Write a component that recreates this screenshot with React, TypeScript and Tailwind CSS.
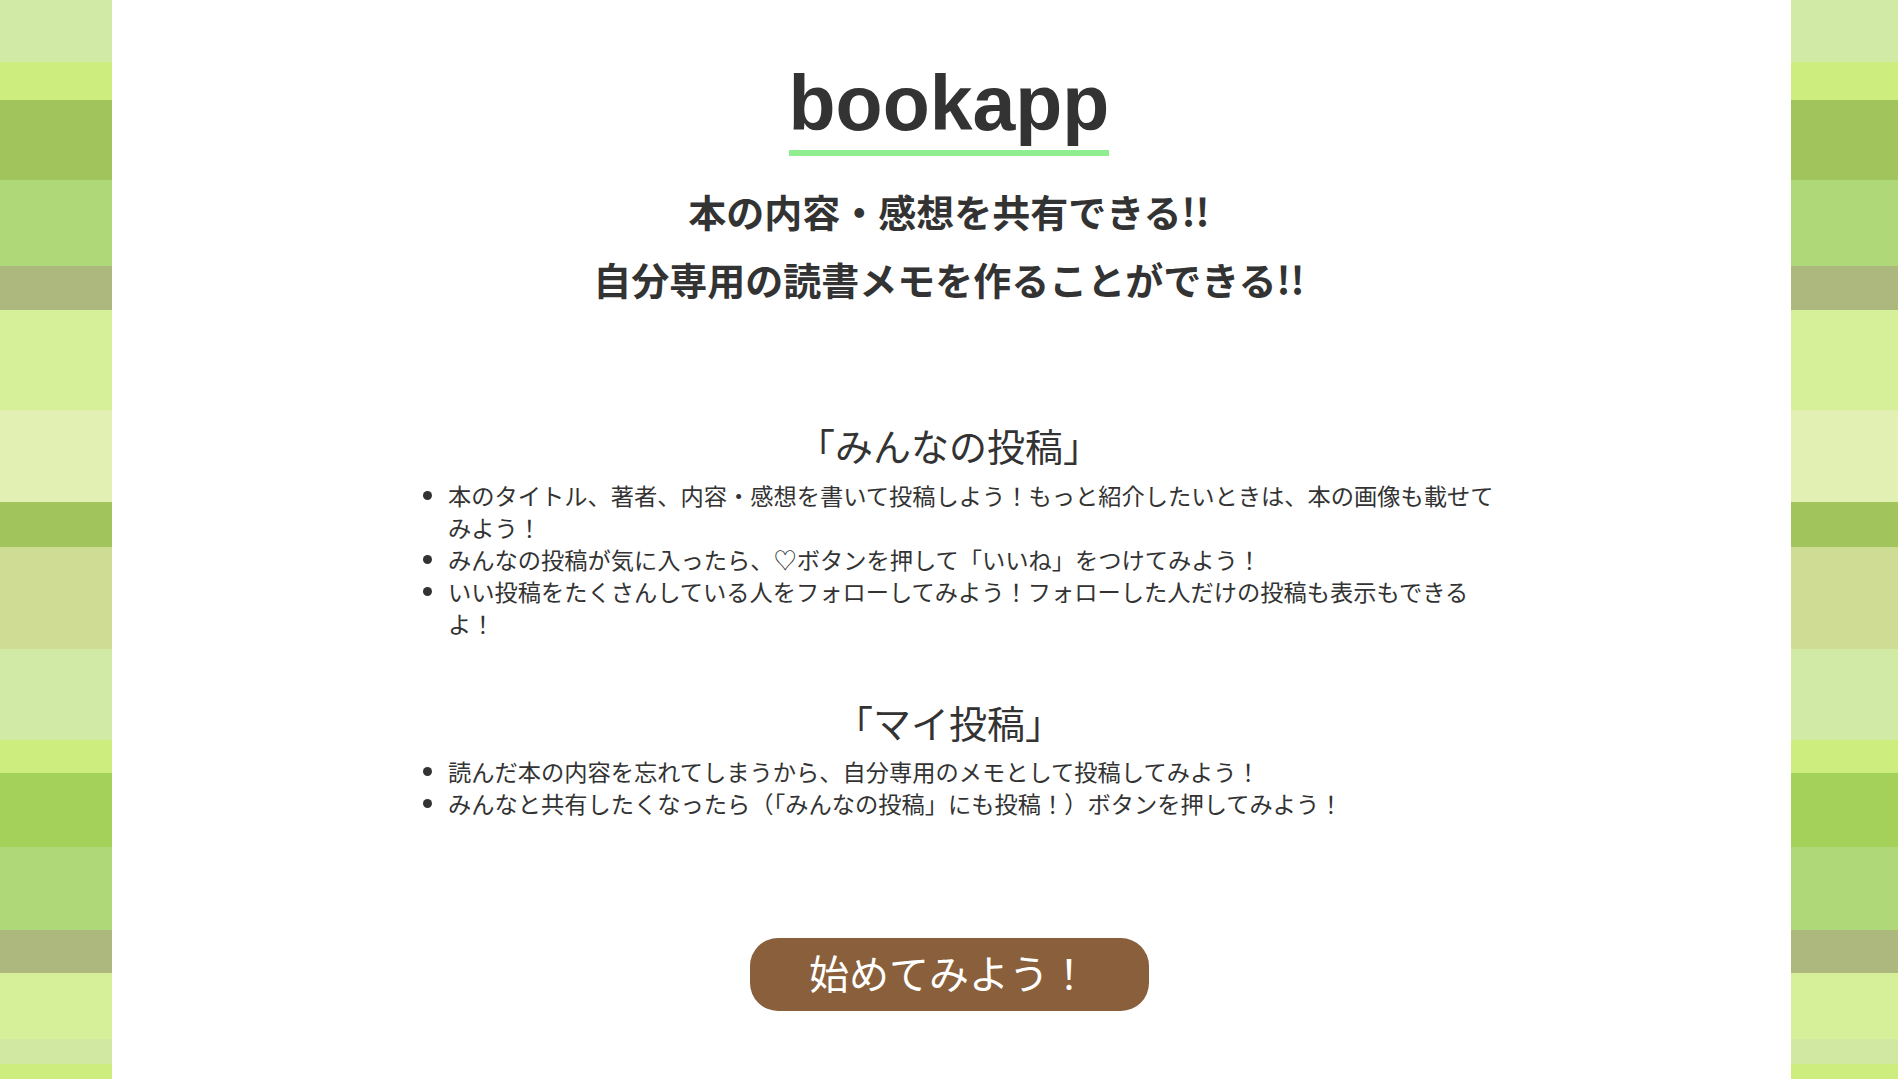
import React from "react";

const stripes: string[] = [
  "h-[62px] bg-[#d1eaa5]",
  "h-[38px] bg-[#cdee7f]",
  "h-[80px] bg-[#a1c45d]",
  "h-[86px] bg-[#afd879]",
  "h-[44px] bg-[#adb87e]",
  "h-[100px] bg-[#d6f09a]",
  "h-[92px] bg-[#e2f0b4]",
  "h-[45px] bg-[#a2c45c]",
  "h-[102px] bg-[#cfdc93]",
  "h-[91px] bg-[#d1eaa5]",
  "h-[33px] bg-[#cdee7f]",
  "h-[74px] bg-[#a3d159]",
  "h-[83px] bg-[#afd879]",
  "h-[43px] bg-[#adb87e]",
  "h-[66px] bg-[#d6f09a]",
  "h-[25px] bg-[#d1e8a3]",
  "h-[40px] bg-[#cdee7f]",
];

function Stripes({ className }: { className: string }) {
  return (
    <div className={`flex flex-col overflow-hidden ${className}`}>
      {stripes.map((c, i) => (
        <div key={i} className={`${c} w-full shrink-0`} />
      ))}
    </div>
  );
}

const jp = "font-['Noto_Sans_CJK_JP',sans-serif]";

export default function App() {
  return (
    <div className="flex h-screen w-full overflow-hidden bg-white">
      <Stripes className="w-[112px] shrink-0" />
      <main
        className={`w-[1679px] shrink-0 bg-white pr-[5px] pt-[60px] text-center text-[#333333] ${jp}`}
      >
        <h1 className="inline-block border-b-[6px] border-[#90ee90] pb-[4px] font-['Liberation_Sans',Arial,sans-serif] text-[77px] font-bold leading-[86px]">
          bookapp
        </h1>
        <div className="mt-[21px] text-[38px] font-bold">
          <p className="leading-[68px]">本の内容・感想を共有できる!!</p>
          <p className="leading-[68px]">自分専用の読書メモを作ることができる!!</p>
        </div>

        <h2 className="mt-[105px] text-[38px] font-normal leading-[54px]">「みんなの投稿」</h2>
        <ul className="mx-auto mt-[7px] w-[1098px] list-outside list-disc pl-[48px] text-left text-[23.25px] leading-[32px]">
          <li>本のタイトル、著者、内容・感想を書いて投稿しよう！もっと紹介したいときは、本の画像も載せてみよう！</li>
          <li>みんなの投稿が気に入ったら、♡ボタンを押して「いいね」をつけてみよう！</li>
          <li>
            いい投稿をたくさんしている人をフォローしてみよう！フォローした人だけの投稿も表示もできる
            <br />
            よ！
          </li>
        </ul>

        <h2 className="mt-[56px] text-[38px] font-normal leading-[54px]">「マイ投稿」</h2>
        <ul className="mx-auto mt-[6px] w-[1098px] list-outside list-disc pl-[48px] text-left text-[23.25px] leading-[32px]">
          <li>読んだ本の内容を忘れてしまうから、自分専用のメモとして投稿してみよう！</li>
          <li>みんなと共有したくなったら（「みんなの投稿」にも投稿！）ボタンを押してみよう！</li>
        </ul>

        <div className="mt-[119px] flex justify-center">
          <button className="flex h-[73px] w-[399px] items-center justify-center rounded-[28px] bg-[#895f3c] pb-[6px] text-[40px] font-normal leading-none text-white">
            始めてみよう！
          </button>
        </div>
      </main>
      <Stripes className="flex-1" />
    </div>
  );
}
